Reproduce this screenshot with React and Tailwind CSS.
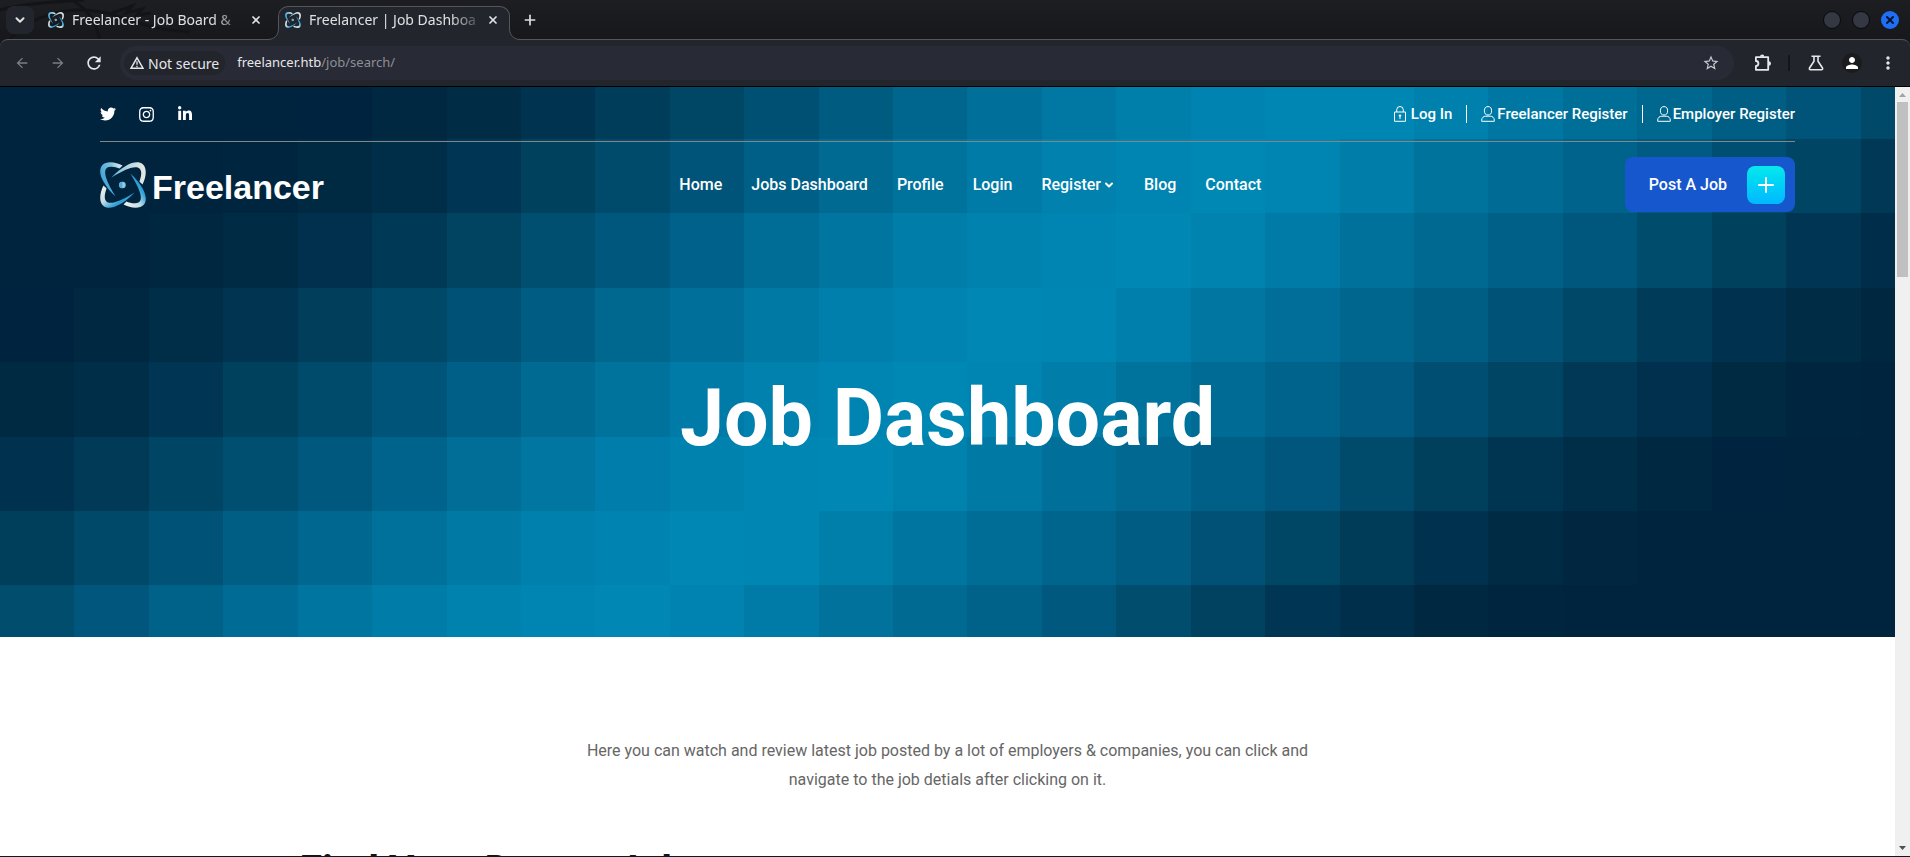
import React from "react";
import { FaTwitter, FaInstagram, FaLinkedinIn } from "react-icons/fa";
import { MdArrowBack, MdArrowForward, MdRefresh, MdStarBorder, MdMoreVert, MdPerson } from "react-icons/md";
import { ChevronDown, Plus, X } from "lucide-react";

/* ---------- mosaic backdrop ---------- */

const LEFT = [136, 132, 129, 123, 115, 106, 95, 84, 75, 65, 54, 46, 42, 37, 35];
const RIGHT = [136, 133, 125, 115, 108, 99, 90, 79, 69, 56, 48, 42, 37, 35];
const PEAKS = [17.4, 16, 14.7, 13.3, 12, 10.6, 9.2, 7.8];
const BLUES = [[35, 62], [42, 66], [48, 77], [54, 83], [65, 94], [75, 107], [84, 122], [95, 134], [106, 147], [114, 156], [124, 168], [133, 178], [136, 181]];

function sample(list, d) {
  const i = Math.floor(d);
  if (i >= list.length - 1) return list[list.length - 1];
  return list[i] + (list[i + 1] - list[i]) * (d - i);
}

function blueFor(g) {
  for (let i = 1; i < BLUES.length; i++) {
    const [g0, b0] = BLUES[i - 1];
    const [g1, b1] = BLUES[i];
    if (g <= g1) return b0 + ((b1 - b0) * (g - g0)) / (g1 - g0);
  }
  return 181;
}

function tileColor(row, col) {
  const d = col - PEAKS[row];
  const g = sample(d < 0 ? LEFT : RIGHT, Math.abs(d));
  return `rgb(0,${Math.round(g)},${Math.round(blueFor(g))})`;
}

const edgeX = (c) => Math.round(c * 74.42);
const edgeY = (r) => (r === 0 ? 0 : r === 8 ? 550 : Math.round(52 + (r - 1) * 74.4));

function Mosaic() {
  const tiles = [];
  for (let r = 0; r < 8; r++) {
    for (let c = 0; c < 26; c++) {
      tiles.push(
        <rect key={`${r}-${c}`} x={edgeX(c)} y={edgeY(r)} width={edgeX(c + 1) - edgeX(c)} height={edgeY(r + 1) - edgeY(r)} fill={tileColor(r, c)} />
      );
    }
  }
  return (
    <svg aria-hidden="true" className="absolute inset-0 h-full w-full" viewBox="0 0 1895 550" preserveAspectRatio="xMidYMin slice" shapeRendering="crispEdges">
      {tiles}
    </svg>
  );
}

/* ---------- drawings ---------- */

const ARM = "M22.5 3.5C16 0 6.5 -1.5 2.2 3.2C-1 7 -0.2 13 3.4 19.5C6.5 25 10.5 30 15.6 34.6C12 28.5 8 22 6 15.5C4.2 9.5 5 5.2 10.5 4.8C13.8 4.6 17 5.6 19.6 6.6Z";

function Orbit({ className, id }) {
  return (
    <svg className={className} viewBox="0 0 46 46" aria-hidden="true">
      <defs>
        <linearGradient id={`${id}-a`} gradientUnits="userSpaceOnUse" x1="22" y1="4" x2="3" y2="14">
          <stop offset="0" stopColor="#e4eef0" />
          <stop offset="0.45" stopColor="#7cc0dd" />
          <stop offset="1" stopColor="#48a9d9" />
        </linearGradient>
        <linearGradient id={`${id}-b`} gradientUnits="userSpaceOnUse" x1="10" y1="3" x2="8" y2="34">
          <stop offset="0" stopColor="#e2e7e4" />
          <stop offset="0.5" stopColor="#b4d5df" />
          <stop offset="1" stopColor="#5fb4db" />
        </linearGradient>
        <linearGradient id={`${id}-c`} gradientUnits="userSpaceOnUse" x1="18" y1="3" x2="2" y2="14">
          <stop offset="0" stopColor="#e8ecea" />
          <stop offset="0.5" stopColor="#c5dde4" />
          <stop offset="1" stopColor="#2f9fd8" />
        </linearGradient>
      </defs>
      <path d={ARM} fill={`url(#${id}-a)`} />
      <path d={ARM} fill={`url(#${id}-b)`} transform="rotate(90 23 23)" />
      <path d={ARM} fill={`url(#${id}-c)`} transform="rotate(180 23 23)" />
      <path d={ARM} fill={`url(#${id}-c)`} transform="rotate(270 23 23)" />
      <circle cx="22.4" cy="23" r="3.3" fill="#8ccae6" />
      <path d="M22.4 19.7a3.3 3.3 0 0 0 0 6.6z" fill="#4fadd9" />
    </svg>
  );
}

function UserIcon() {
  return (
    <svg className="h-4 w-3.5" viewBox="0 0 14 16" fill="none" stroke="currentColor" aria-hidden="true">
      <ellipse cx="7" cy="4.8" rx="3.6" ry="4.2" />
      <path d="M.7 15.3v-1.2c0-2.4 1.8-3.9 4.2-3.9h4.2c2.4 0 4.2 1.5 4.2 3.9v1.2z" />
    </svg>
  );
}

function LockIcon() {
  return (
    <svg className="h-4 w-3.5" viewBox="0 0 14 16" fill="none" stroke="currentColor" aria-hidden="true">
      <path d="M1.5 6h11v9.3h-11z" />
      <path d="M3.7 6V3.8a3.3 3.3 0 0 1 6.6 0V6M7 10v3" />
      <circle cx="7" cy="9.6" r=".8" fill="currentColor" />
    </svg>
  );
}

function WarningIcon() {
  return (
    <svg className="h-3.5 w-3.5" viewBox="0 0 14 14" fill="none" stroke="currentColor" strokeWidth="1.5" aria-hidden="true">
      <path d="M7 1.8 13 12.2H1z" />
      <path d="M7 5.2v3.6M7 9.8v1.4" strokeWidth="1.3" />
    </svg>
  );
}

function FlaskIcon() {
  return (
    <svg className="h-4 w-4" viewBox="0 0 16 16" fill="none" stroke="currentColor" strokeWidth="1.6" aria-hidden="true">
      <path d="M3.5 1.3h9M6 1.3v5L1.5 13c-.4.9 0 1.7.9 1.7h11.2c.9 0 1.3-.8.9-1.7L10 6.300v-5" />
    </svg>
  );
}

function PuzzleIcon() {
  return (
    <svg className="h-[18px] w-[18px]" viewBox="0 0 18 18" fill="none" stroke="currentColor" strokeWidth="1.8" strokeLinejoin="round" aria-hidden="true">
      <path d="M1.900 3.200H14.200V15.800H1.900V12A2.500 2.500 0 0 0 1.900 7Z" />
      <path d="M6 2.800a2.200 2.200 0 0 1 4.400 0zM14.800 7.300a2.200 2.200 0 0 1 0 4.400z" fill="currentColor" stroke="none" />
    </svg>
  );
}

/* ---------- browser frame ---------- */

function TabLabel({ id, title }) {
  return (
    <>
      <Orbit id={id} className="h-4 w-4 shrink-0" />
      <span className="ml-2 w-[166px] whitespace-nowrap text-left text-[14px] leading-5 [mask-image:linear-gradient(to_right,black_85%,#0004)]">{title}</span>
      <X className="ml-3 h-3 w-3 shrink-0" strokeWidth={3.500} aria-hidden="true" />
    </>
  );
}

function TabStrip() {
  return (
    <div className="relative flex h-[39px] shrink-0 items-center overflow-hidden bg-gradient-to-b from-[#1c1e22] to-[#17181c] text-[#dfe0e2]">
      <svg aria-hidden="true" className="absolute left-0 top-0 h-[39px] w-[200px]" viewBox="0 0 200 39" fill="none" stroke="#131418" strokeWidth="3">
        <path d="M0 10C30 2 60 2 84 0M72 0C92 12 96 26 100 39M10 39C40 8 80 6 110 14C140 22 150 30 190 32" />
        <path d="M112 13l20 -7-6 7 16-4-5 6 14-2" />
      </svg>
      <button aria-label="Search tabs" className="relative ml-1.5 flex h-7 w-7 items-center justify-center rounded-lg bg-[#22252d]">
        <ChevronDown className="h-3.5 w-3.5" strokeWidth={3.500} />
      </button>
      <button className="relative ml-3.5 flex h-8 w-[216px] items-center">
        <TabLabel id="t1" title="Freelancer - Job Board &" />
      </button>
      <div className="relative ml-3.5 h-[39px] w-[232px] pt-1.5">
        <button className="flex h-[33px] w-full items-center rounded-t-[10px] border border-b-0 border-[#54565c] bg-[#23252d] pb-1.5 pl-1.5">
          <TabLabel id="t2" title="Freelancer | Job Dashboa" />
        </button>
      </div>
      <button aria-label="New tab" className="ml-1.5 flex h-7 w-7 items-center justify-center">
        <Plus className="h-4 w-4" strokeWidth={2.500} />
      </button>
      <div className="ml-auto mr-[11px] flex items-center gap-[11px]">
        <button aria-label="Minimize" className="h-[18px] w-[18px] rounded-full border border-[#08090b] bg-[#343843]" />
        <button aria-label="Maximize" className="h-[18px] w-[18px] rounded-full border border-[#08090b] bg-[#343843]" />
        <button aria-label="Close window" className="flex h-[18px] w-[18px] items-center justify-center rounded-full bg-[#1f6ff5] text-[#0b1430]">
          <X className="h-3 w-3" strokeWidth={4} />
        </button>
      </div>
    </div>
  );
}

function Toolbar() {
  return (
    <div className="bg-[#17181c]">
      <div className="relative flex h-12 shrink-0 items-center rounded-t-lg border-b border-t border-b-black border-t-[#54565c] bg-[#23252d] text-[#e6e7e9]">
        {/* opening under the active tab, with the flared feet at both sides */}
        <svg aria-hidden="true" className="absolute -top-[11px] left-[268px] h-3 w-[252px]" viewBox="0 0 252 12">
          <path d="M0 12V10.500C6 10.500 10 6 10 0H242C242 6 246 10.500 252 10.500V12Z" fill="#23252d" />
          <path d="M0 10.500C6 10.500 10.500 6 10.500 0M241.500 0C241.500 6 246 10.500 252 10.500" fill="none" stroke="#54565c" />
        </svg>
        <button aria-label="Back" className="ml-3.5 text-[#7b7d83]"><MdArrowBack className="h-4 w-4" /></button>
        <button aria-label="Forward" className="ml-5 text-[#7b7d83]"><MdArrowForward className="h-4 w-4" /></button>
        <button aria-label="Reload" className="ml-[18px]"><MdRefresh className="h-5 w-5" /></button>
        <div className="ml-4 flex h-[34px] flex-1 items-center rounded-full bg-[#282a35] pl-1 pr-3.5">
          <button className="flex h-6 items-center gap-1 rounded-full bg-[#23252d] px-1.5 text-[14px]">
            <WarningIcon />
            Not secure
          </button>
          <div className="ml-3 flex-1 text-[13px]" role="textbox" aria-label="Address">
            freelancer.htb<span className="text-[#8d8f96]">/job/search/</span>
          </div>
          <button aria-label="Bookmark"><MdStarBorder className="h-[18px] w-[18px] text-[#c8c9cc]" /></button>
        </div>
        <button aria-label="Extensions" className="ml-5"><PuzzleIcon /></button>
        <span className="ml-4 h-4 w-0.5 bg-[#15161a]" />
        <button aria-label="Labs" className="ml-[18px]"><FlaskIcon /></button>
        <button aria-label="Profile" className="ml-[18px] flex h-5 w-5 items-center justify-center rounded-full bg-[#1a1b1c] text-white">
          <MdPerson className="h-[18px] w-[18px]" />
        </button>
        <button aria-label="Menu" className="ml-4 mr-3"><MdMoreVert className="h-5 w-5" /></button>
      </div>
    </div>
  );
}

function Scrollbar() {
  return (
    <div aria-hidden="true" className="flex w-[15px] shrink-0 flex-col items-center bg-[#f0f0f0]">
      <svg className="h-[15px] w-[15px]" viewBox="0 0 15 15"><path d="M4 10h7L7.500 6z" fill="#a3a3a3" /></svg>
      <div className="h-[175px] w-[11px] bg-[#c0c0c0]" />
      <svg className="mt-auto h-[15px] w-[15px]" viewBox="0 0 15 15"><path d="M4 5h7L7.500 9z" fill="#505050" /></svg>
    </div>
  );
}

/* ---------- site ---------- */

const NAV = ["Home", "Jobs Dashboard", "Profile", "Login", "Register", "Blog", "Contact"];

function Header() {
  return (
    <header className="px-[100px] text-white">
      <div className="flex h-[55px] items-center justify-between border-b border-[#868686] text-[15px] font-medium">
        <div className="flex items-center gap-[22px]">
          <a href="#twitter" aria-label="Twitter"><FaTwitter className="h-4 w-4" /></a>
          <a href="#instagram" aria-label="Instagram"><FaInstagram className="h-[17px] w-[17px]" /></a>
          <a href="#linkedin" aria-label="LinkedIn"><FaLinkedinIn className="h-4 w-4" /></a>
        </div>
        <div className="flex items-center gap-3.5">
          <a href="#login" className="flex items-center gap-1"><LockIcon />Log In</a>
          <span className="h-[18px] w-px bg-white" />
          <a href="#freelancer" className="flex items-center gap-0.5"><UserIcon />Freelancer Register</a>
          <span className="h-[18px] w-px bg-white" />
          <a href="#employer" className="flex items-center gap-0.5"><UserIcon />Employer Register</a>
        </div>
      </div>
      <div className="flex items-center justify-between pt-[15px]">
        <a href="#home" className="flex items-center gap-1.5">
          <Orbit id="logo" className="h-[46px] w-[46px]" />
          <span className="pt-1 font-['Liberation_Sans',Arial,sans-serif] text-[34px] font-bold leading-10">Freelancer</span>
        </a>
        <nav aria-label="Main" className="flex gap-[29px] pr-2 text-base font-medium">
          {NAV.map((item) => (
            <a key={item} href={`#${item}`} className="flex items-center gap-0.5">
              {item}
              {item === "Register" && <ChevronDown className="h-3 w-3" strokeWidth={4} aria-hidden="true" />}
            </a>
          ))}
        </nav>
        <button className="flex h-[55px] items-center gap-5 rounded-lg bg-[#1757cd] pl-6 pr-2.5 text-base font-medium">
          Post A Job
          <span className="flex h-[38px] w-[38px] items-center justify-center rounded-lg bg-gradient-to-b from-[#0ae8ec] to-[#00b8ff]">
            <Plus className="h-6 w-6" strokeWidth={2} aria-hidden="true" />
          </span>
        </button>
      </div>
    </header>
  );
}

function Site() {
  return (
    <div className="min-w-0 flex-1 overflow-hidden bg-white font-[Roboto,sans-serif]">
      <section className="relative">
        <Mosaic />
        <div className="relative flex h-[550px] flex-col">
          <Header />
          <h1 className="pt-[158px] text-center text-[79px] font-bold leading-[96px] text-white">Job Dashboard</h1>
        </div>
      </section>
      <section className="pt-[99px]">
        <p className="mx-auto max-w-[760px] text-center text-base leading-[29px] text-[#666]">
          Here you can watch and review latest job posted by a lot of employers &amp; companies, you can click and navigate to the job detials after clicking on it.
        </p>
        <div className="mx-auto max-w-[1296px] pt-[51px]">
          <h2 className="text-[41px] font-bold leading-[50px] text-[#141414]">Find Your Dream Job</h2>
        </div>
      </section>
    </div>
  );
}

export default function App() {
  return (
    <div className="flex h-screen flex-col overflow-hidden border-b border-[#16171a] bg-[#23252d] font-['Noto_Sans',sans-serif]">
      <TabStrip />
      <Toolbar />
      <main className="flex min-h-0 flex-1">
        <Site />
        <Scrollbar />
      </main>
    </div>
  );
}
